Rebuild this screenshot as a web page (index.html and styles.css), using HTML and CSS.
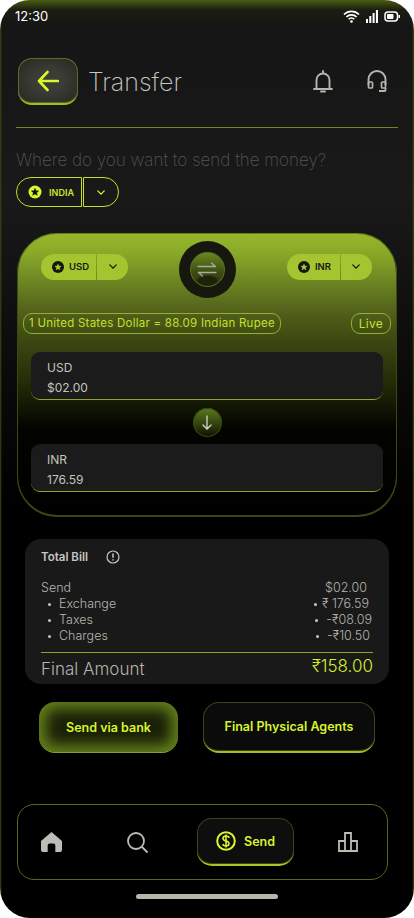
FILE: index.html
```html
<!DOCTYPE html>
<html lang="en">
<head>
    <meta charset="UTF-8">
    <meta name="viewport" content="width=device-width, initial-scale=1.0">
    <title>Transfer</title>
    <link rel="stylesheet" href="styles.css">
</head>
<body>
    <div class="phone">
        <div class="status-bar">
            <span class="time">12:30</span>
            <div class="status-icons">
                <svg width="17" height="13" viewBox="0 0 17 13"><path d="M1 4.500a10.500 10.500 0 0 1 15 0M3.400 7a7 7 0 0 1 10.200 0M5.700 9.300a3.700 3.700 0 0 1 5.600 0" fill="none" stroke="#fff" stroke-width="1.700"/><circle cx="8.500" cy="11.500" r="1.300" fill="#fff"/></svg>
                <svg width="12" height="13" viewBox="0 0 12 13"><path d="M0 9h2v4H0zM3.300 6h2v7h-2zM6.600 3h2v10h-2zM9.900 0H12v13H9.900z" fill="#fff"/></svg>
                <svg width="16" height="11" viewBox="0 0 16 11"><rect x="1" y="1" width="12.500" height="9" rx="3" fill="none" stroke="#fff" stroke-width="1.500"/><rect x="3" y="3" width="6.500" height="5" rx="1" fill="#fff"/><rect x="14.500" y="4" width="1.500" height="3" fill="#fff"/></svg>
            </div>
        </div>

        <header class="top-bar">
            <button class="back-btn">
                <svg width="22" height="22" viewBox="0 0 22 22"><path d="M10.500 2 2 11l8.500 9M2 11h19" fill="none" stroke="#dcf62e" stroke-width="2.600" stroke-linecap="round" stroke-linejoin="round"/></svg>
            </button>
            <h1 class="title">Transfer</h1>
            <div class="top-actions">
                <svg width="20" height="23" viewBox="0 0 20 23"><path d="M10 1v2M3.500 18V10a6.500 6.500 0 0 1 13 0v8M1 19h18" fill="none" stroke="#b5b5ad" stroke-width="1.900" stroke-linecap="round"/><path d="M8 21.500h4" stroke="#b5b5ad" stroke-width="2" stroke-linecap="round"/></svg>
                <svg width="20" height="23" viewBox="0 0 20 23"><path d="M1.500 15V9.500a8.500 8.500 0 0 1 17 0V15" fill="none" stroke="#b5b5ad" stroke-width="1.900"/><rect x="1.500" y="12" width="4" height="6" rx="1" fill="none" stroke="#b5b5ad" stroke-width="1.700"/><rect x="14.500" y="12" width="4" height="6" rx="1" fill="none" stroke="#b5b5ad" stroke-width="1.700"/><path d="M18.500 18v2a1 1 0 0 1-1 1H12" fill="none" stroke="#b5b5ad" stroke-width="1.900"/></svg>
            </div>
        </header>

        <p class="question">Where do you want to send the money?</p>
        <div class="country-select">
            <div class="country-name">
                <svg class="star" width="14" height="14" viewBox="0 0 14 14"><circle cx="7" cy="7" r="6.500" fill="#dcf62e"/><path d="m7 2.800 1.200 2.800 3 .2-2.300 2 .8 3L7 9.200l-2.700 1.600.8-3-2.300-2 3-.2z" fill="#15170f"/></svg>
                <span>INDIA</span>
            </div>
            <div class="country-arrow">
                <svg width="8" height="5" viewBox="0 0 10 6"><path d="m1 1 4 4 4-4" fill="none" stroke="#dcf62e" stroke-width="1.600" stroke-linecap="round"/></svg>
            </div>
        </div>

        <section class="convert-card">
            <div class="currency-row">
                <div class="currency-pill">
                    <div class="currency-name usd">
                        <svg width="12" height="12" viewBox="0 0 14 14"><circle cx="7" cy="7" r="7" fill="#15170f"/><path d="m7 2.800 1.200 2.800 3 .2-2.300 2 .8 3L7 9.200l-2.700 1.600.8-3-2.300-2 3-.2z" fill="#a4c530"/></svg>
                        <span>USD</span>
                    </div>
                    <div class="currency-arrow">
                        <svg width="8" height="5" viewBox="0 0 10 6"><path d="m1 1 4 4 4-4" fill="none" stroke="#15170f" stroke-width="1.600" stroke-linecap="round"/></svg>
                    </div>
                </div>
                <div class="swap-ring">
                    <div class="swap-btn">
                        <svg width="20" height="15" viewBox="0 0 20 15"><path d="M1 4.500h17.500M14.500 1l4 3.500M19 10.500H1.500M5.500 14l-4-3.500" fill="none" stroke="#a9ab9f" stroke-width="1.300" stroke-linecap="round"/></svg>
                    </div>
                </div>
                <div class="currency-pill">
                    <div class="currency-name">
                        <svg width="12" height="12" viewBox="0 0 14 14"><circle cx="7" cy="7" r="7" fill="#15170f"/><path d="m7 2.800 1.200 2.800 3 .2-2.300 2 .8 3L7 9.200l-2.700 1.600.8-3-2.300-2 3-.2z" fill="#a4c530"/></svg>
                        <span>INR</span>
                    </div>
                    <div class="currency-arrow">
                        <svg width="8" height="5" viewBox="0 0 10 6"><path d="m1 1 4 4 4-4" fill="none" stroke="#15170f" stroke-width="1.600" stroke-linecap="round"/></svg>
                    </div>
                </div>
            </div>

            <div class="rate-row">
                <span class="rate-tag">1 United States Dollar = 88.09 Indian Rupee</span>
                <span class="rate-tag live">Live</span>
            </div>

            <div class="amount-box">
                <span>USD</span>
                <span>$02.00</span>
            </div>
            <div class="down-btn">
                <svg width="10" height="15" viewBox="0 0 10 15"><path d="M5 1v13M1 10l4 4 4-4" fill="none" stroke="#d5d6cc" stroke-width="1.300" stroke-linecap="round"/></svg>
            </div>
            <div class="amount-box">
                <span>INR</span>
                <span>176.59</span>
            </div>
        </section>

        <section class="bill">
            <div class="bill-head">
                <strong>Total Bill</strong>
                <svg width="14" height="14" viewBox="0 0 14 14"><circle cx="7" cy="7" r="6" fill="none" stroke="#c8c8c0" stroke-width="1.200"/><path d="M7 3.500v4.200M7 9.300v1.200" stroke="#c8c8c0" stroke-width="1.500"/></svg>
            </div>
            <div class="bill-rows">
                <div class="bill-row"><span>Send</span><span class="bill-val send-val">$02.00</span></div>
                <div class="bill-row"><span class="sub">Exchange</span><span class="bill-val exchange-val">₹ 176.59</span></div>
                <div class="bill-row"><span class="sub">Taxes</span><span class="bill-val">-₹08.09</span></div>
                <div class="bill-row"><span class="sub">Charges</span><span class="bill-val charges-val">-₹10.50</span></div>
            </div>
            <div class="bill-total">
                <span>Final Amount</span>
                <span class="total-val">₹158.00</span>
            </div>
        </section>

        <div class="actions">
            <button class="action-btn primary">Send via bank</button>
            <button class="action-btn">Final Physical Agents</button>
        </div>

        <nav class="bottom-nav">
            <svg width="21" height="20" viewBox="0 0 22 21"><path d="M11 0 0 9.500V19a2 2 0 0 0 2 2h5v-7a2 2 0 0 1 2-2h4a2 2 0 0 1 2 2v7h5a2 2 0 0 0 2-2V9.500z" fill="#bcbdb4"/></svg>
            <svg class="nav-search" width="21" height="21" viewBox="0 0 21 21"><circle cx="9" cy="9" r="8" fill="none" stroke="#bcbdb4" stroke-width="1.800"/><path d="m15 15 5 5" stroke="#bcbdb4" stroke-width="1.800" stroke-linecap="round"/></svg>
            <div class="nav-send">
                <svg width="20" height="20" viewBox="0 0 20 20"><circle cx="10" cy="10" r="8.800" fill="none" stroke="#dcf62e" stroke-width="2"/><path d="M13 7c0-1.300-1.300-2-3-2s-3 .8-3 2.400C7 11 13 9 13 12.600c0 1.600-1.300 2.400-3 2.400s-3-.7-3-2M10 3.500v13" fill="none" stroke="#dcf62e" stroke-width="1.600"/></svg>
                <span>Send</span>
            </div>
            <svg class="nav-chart" width="20" height="20" viewBox="0 0 20 20"><path d="M1 19V9h6V1h6v8h6v10zM7 9v10M13 9v10" fill="none" stroke="#bcbdb4" stroke-width="1.800"/></svg>
        </nav>

        <div class="home-bar"></div>
    </div>
</body>
</html>
```

FILE: styles.css
```css
* {
    box-sizing: border-box;
}
body {
    margin: 0;
    background: #fff;
    font-family: 'Inter', sans-serif;
}
.phone {
    width: 414px;
    height: 918px;
    border-radius: 30px;
    overflow: hidden;
    padding: 0 16px;
    background:
        linear-gradient(#4a5c12 0, #1b1d12 10px, transparent 26px),
        linear-gradient(90deg, #3c4a10 0, transparent 2px, transparent 412px, #3c4a10 414px),
        linear-gradient(#151515 0, #191919 200px, #0d0d0d 340px, #000 510px);
    display: flex;
    flex-direction: column;
}
.status-bar {
    height: 32px;
    flex: none;
    display: flex;
    justify-content: space-between;
    align-items: center;
    color: #fff;
}
.time {
    font-size: 13px;
    margin-left: -1px;
}
.status-icons {
    display: flex;
    align-items: center;
    gap: 6px;
    margin-right: -2px;
}
.top-bar {
    margin-top: 26px;
    height: 47px;
    display: flex;
    align-items: center;
    flex: none;
}
.back-btn {
    width: 60px;
    height: 47px;
    margin-left: 2px;
    border: none;
    border-bottom: 2px solid #9cc11f;
    border-radius: 14px;
    background: radial-gradient(ellipse at center, #3a3c35 35%, #24261f 100%);
    box-shadow: inset 0 0 0 1px #5b6b27;
    display: flex;
    align-items: center;
    justify-content: center;
    padding: 0;
}
.title {
    margin: 0 0 0 10px;
    font-size: 25px;
    font-weight: 200;
    color: #c8c8c0;
}
.top-actions {
    margin-left: auto;
    margin-right: 11px;
    display: flex;
    gap: 34px;
}
.question {
    margin: 22px 0 0;
    padding-top: 13px;
    border-top: 1px solid #6c8a1d;
    font-size: 17px;
    font-weight: 200;
    line-height: 39px;
    height: 50px;
    color: #555552;
    white-space: nowrap;
}
.country-select {
    display: flex;
    gap: 1px;
    height: 30px;
    flex: none;
}
.country-name, .country-arrow {
    border: 1px solid #c3e02a;
    display: flex;
    align-items: center;
    justify-content: center;
}
.country-name {
    width: 66px;
    gap: 7px;
    padding-left: 4px;
    border-radius: 15px 0 0 15px;
    font-size: 9px;
    font-weight: 600;
    color: #cde82c;
}
.country-arrow {
    width: 36px;
    border-radius: 0 15px 15px 0;
}
.convert-card {
    margin: 26px 1px 0;
    height: 284px;
    flex: none;
    padding: 8px 6px 0;
    border-radius: 40px;
    background: linear-gradient(#97b82c 0, #8aa828 20px, #6b8422 50px, #505f1a 80px, #3a4610 110px, #232b08 150px, #030400 195px, #000 100%);
    box-shadow: inset 0 0 0 1px rgba(62, 78, 18, 0.55), inset 0 -1px 0 1px #3a4610;
    display: flex;
    flex-direction: column;
}
.currency-row {
    display: flex;
    justify-content: space-between;
    align-items: center;
    padding: 0 19px 0 18px;
    height: 57px;
    flex: none;
}
.currency-pill {
    display: flex;
    gap: 1px;
    height: 26px;
    margin-bottom: 6px;
    color: #15170f;
    font-size: 9.500px;
    font-weight: 600;
}
.currency-name, .currency-arrow {
    background: #a4c530;
    display: flex;
    align-items: center;
    justify-content: center;
}
.currency-name {
    padding: 0 9px 0 11px;
    gap: 5px;
    border-radius: 13px 0 0 13px;
}
.currency-name.usd {
    padding-right: 7px;
}
.currency-arrow {
    width: 31px;
    border-radius: 0 13px 13px 0;
}
.swap-ring {
    width: 57px;
    height: 57px;
    border-radius: 50%;
    background: #16180f;
    display: flex;
    align-items: center;
    justify-content: center;
}
.swap-btn {
    width: 35px;
    height: 35px;
    border-radius: 50%;
    background: radial-gradient(ellipse 12px 6px at 50% 82%, #1c230a 70%, transparent 100%), linear-gradient(#6c8a20, #3b4a12 60%, #2a350c);
    box-shadow: inset 0 0 0 1px #5c7420;
    display: flex;
    align-items: center;
    justify-content: center;
}
.rate-row {
    margin-top: 15px;
    display: flex;
    justify-content: space-between;
    flex: none;
}
.rate-tag {
    height: 21px;
    padding: 0 5px;
    border: 1px solid #93b12c;
    border-radius: 9px;
    color: #c3e02a;
    font-size: 11.500px;
    line-height: 19px;
    letter-spacing: 0.25px;
    white-space: nowrap;
}
.live {
    padding: 0 7px;
    font-size: 12px;
}
.amount-box {
    flex: none;
    height: 48px;
    margin: 0 8px;
    padding: 6px 16px 0;
    background: #1b1b1b;
    border-bottom: 1px solid #8aa625;
    border-radius: 9px;
    color: #c4c4bc;
    font-size: 12px;
    line-height: 20px;
    display: flex;
    flex-direction: column;
}
.rate-row + .amount-box {
    margin-top: 18px;
}
.down-btn {
    flex: none;
    width: 29px;
    height: 29px;
    margin: 8px auto 7px;
    border-radius: 50%;
    background: linear-gradient(#5d7a1c, #2f3c0e 60%, #0c0f03);
    box-shadow: inset 0 0 0 1px #38470f;
    display: flex;
    align-items: center;
    justify-content: center;
}
.bill {
    flex: none;
    margin: 22px 9px 0;
    height: 145px;
    padding: 9px 16px 0;
    border-radius: 16px;
    background: #191919;
    color: #b5b5ad;
    font-weight: 300;
}
.bill-head {
    display: flex;
    align-items: center;
    gap: 18px;
    height: 18px;
    font-size: 11.500px;
    color: #c8c8c0;
}
.bill-head strong {
    font-weight: 600;
}
.bill-rows {
    margin-top: 14px;
    padding-bottom: 8px;
    border-bottom: 1px solid #8aa61f;
}
.bill-row {
    display: flex;
    justify-content: space-between;
    font-size: 12.500px;
    line-height: 16px;
}
.sub {
    padding-left: 18px;
    position: relative;
}
.sub::before, .bill-val::before {
    content: "";
    position: absolute;
    width: 3px;
    height: 3px;
    top: 7px;
    left: 7px;
    border-radius: 50%;
    background: #c8c8c0;
}
.bill-val {
    position: relative;
    margin-right: 1px;
    padding-left: 11px;
}
.bill-val::before {
    left: 0;
}
.send-val {
    margin-right: 6px;
}
.send-val::before {
    display: none;
}
.exchange-val {
    margin-right: 4px;
    padding-left: 8px;
}
.charges-val {
    margin-right: 3px;
}
.bill-total {
    display: flex;
    justify-content: space-between;
    align-items: center;
    height: 32px;
    font-size: 17px;
    color: #b5b5ad;
}
.total-val {
    color: #d4f02c;
    margin-top: -6px;
}
.actions {
    flex: none;
    margin: 18px 23px 0;
    display: flex;
    justify-content: space-between;
}
.action-btn {
    width: 172px;
    height: 51px;
    border: none;
    border-bottom: 2px solid #9cc11f;
    border-radius: 16px;
    background: #0b0b0b;
    box-shadow: inset 0 0 0 1px #3a4518;
    color: #d8f42c;
    font-family: 'Inter', sans-serif;
    font-size: 12.500px;
    font-weight: 600;
    padding: 0;
}
.action-btn.primary {
    width: 139px;
    background: #1a2008;
    box-shadow: inset 0 0 14px 7px #64801a;
    border-bottom: 1px solid #86a322;
}
.bottom-nav {
    flex: none;
    margin: 51px 10px 0 1px;
    height: 76px;
    padding: 0 0 0 23px;
    border: 1px solid #55691a;
    border-radius: 17px;
    display: flex;
    align-items: center;
}
.nav-search {
    margin-left: 65px;
}
.nav-send {
    width: 97px;
    height: 48px;
    margin-left: 49px;
    border-radius: 15px;
    border-bottom: 2px solid #a6c822;
    background: #0e0e0e;
    box-shadow: inset 0 0 0 1px #3a4518;
    display: flex;
    align-items: center;
    justify-content: center;
    gap: 8px;
    color: #d8f42c;
    font-size: 12.500px;
    font-weight: 600;
}
.nav-chart {
    margin-left: 44px;
}
.home-bar {
    flex: none;
    width: 142px;
    height: 5px;
    margin: 14px auto 0;
    border-radius: 3px;
    background: #b5b7a8;
}
```
